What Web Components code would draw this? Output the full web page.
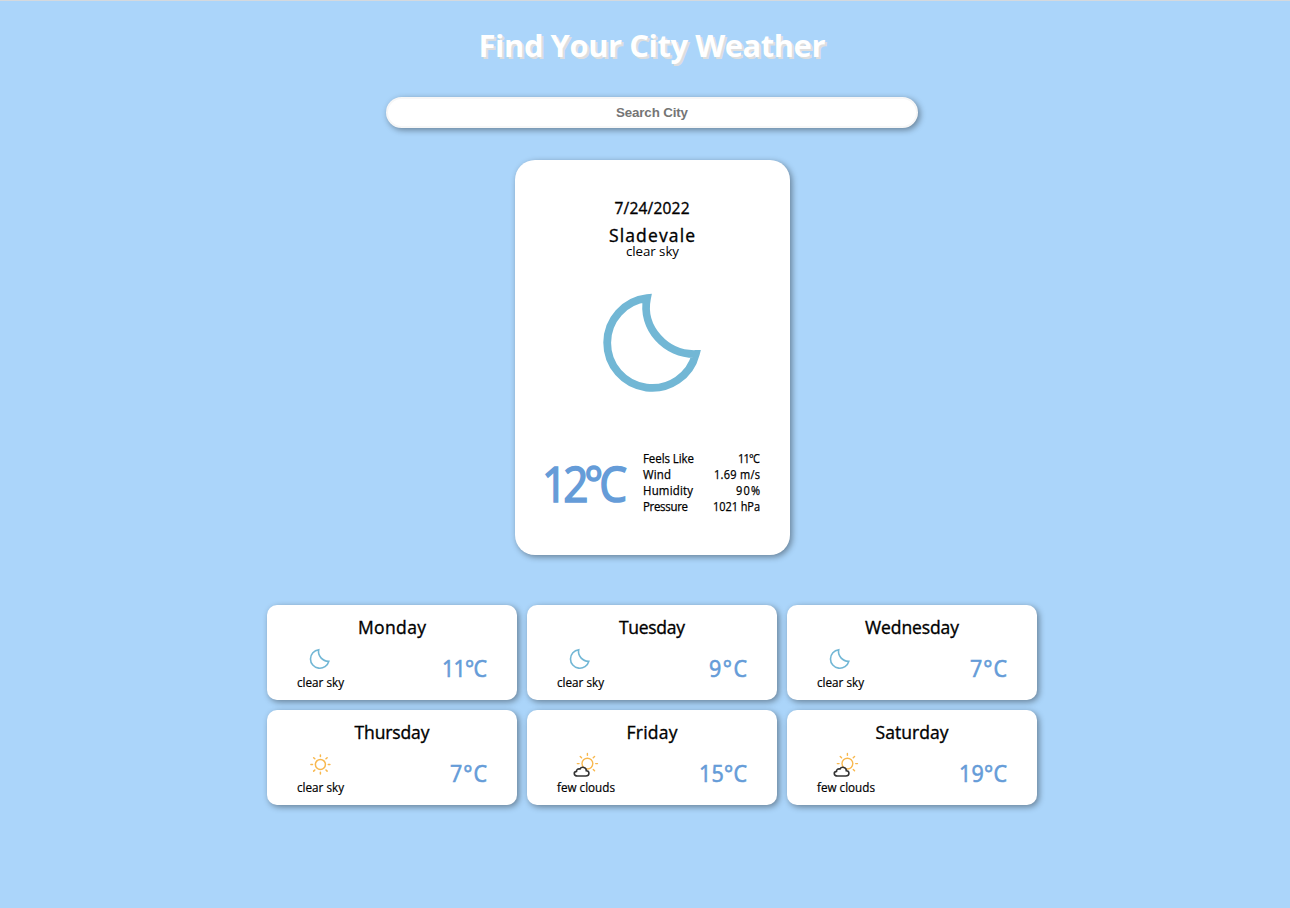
<!DOCTYPE html>
<html lang="en">
<head>
<meta charset="utf-8">
<title>Find Your City Weather</title>
<style>
html,body{margin:0;height:100%;overflow:hidden;background:#abd5fa}
body{font-family:"Open Sans","Noto Sans",sans-serif;color:#000}
</style>
</head>
<body>
<weather-app></weather-app>
<script>
// A single line of text whose tracking is adjusted to fill a given width.
// The optional x attribute condenses the glyphs horizontally.
class TextRun extends HTMLElement {
  connectedCallback() {
    const w = +this.getAttribute('w');
    const x = +(this.getAttribute('x') || 1);
    this.attachShadow({mode:'open'}).innerHTML =
      `<style>:host{display:block;flex:none;width:${w}px;white-space:nowrap}span{display:inline-block}</style><span><slot></slot></span>`;
    const span = this.shadowRoot.querySelector('span');
    const n = this.textContent.length;
    const natural = span.getBoundingClientRect().width;
    span.style.letterSpacing = ((w / x - natural) / (n - 1)).toFixed(3) + 'px';
    if (x !== 1) {
      span.style.transformOrigin = 'left';
      span.style.transform = `scaleX(${x})`;
    }
  }
}

const sunRays = (cx, cy, a, b, skip = []) => [0,1,2,3,4,5,6,7].filter(i => !skip.includes(i)).map(i => {
  const t = i * Math.PI / 4, c = Math.cos(t), s = Math.sin(t);
  return `M${(cx+a*c).toFixed(2)} ${(cy+a*s).toFixed(2)}L${(cx+b*c).toFixed(2)} ${(cy+b*s).toFixed(2)}`;
}).join('');
const icons = {
  moon: `<svg viewBox="0 0 104 104"><path d="M47 8.2A45 45 0 1 0 95.8 64C66 65 41 38 47 8.2Z" fill="none" stroke="#72b7d5" stroke-width="7.8" stroke-miterlimit="8"/></svg>`,
  sun: `<svg viewBox="0 0 30 26"><g fill="none" stroke="#f8b84e" stroke-width="1.5" stroke-linecap="round"><circle cx="15.4" cy="12.4" r="5"/><path d="${sunRays(15.4,12.4,7.9,9.5)}"/></g></svg>`,
  cloud: `<svg viewBox="0 0 30 26"><g fill="none" stroke="#f8b84e" stroke-width="1.4" stroke-linecap="round"><circle cx="16.4" cy="11.6" r="5.4"/><path d="${sunRays(16.4,11.6,8.3,10.1,[3])}"/></g><path d="M6.4 24h8.4c4 0 4.2-4.9.5-5.3.1-3.6-4.6-4.6-6.4-1.7-2-.5-3.5.7-3.4 2.4-3.2.5-3 4.6.9 4.6Z" fill="#fff" stroke="#333" stroke-width="1.6"/></svg>`
};
class WeatherIcon extends HTMLElement {
  connectedCallback() {
    this.attachShadow({mode:'open'}).innerHTML =
      `<style>:host{display:block;flex:none}svg{display:block;width:100%;height:100%}</style>${icons[this.getAttribute('name')]}`;
  }
}

class SearchBox extends HTMLElement {
  connectedCallback() {
    this.attachShadow({mode:'open'}).innerHTML = `<style>
:host{display:flex;justify-content:center;box-sizing:border-box;width:532px;height:31px;border:2px solid #f7f7f7;border-radius:16px;background:#fff;
box-shadow:2px 2px 6px rgba(0,0,0,.4);font:bold 13.333px/27px "Liberation Sans",Arial,sans-serif;color:#757575}
</style><text-run w="72">Search City</text-run>`;
  }
}

class CurrentWeather extends HTMLElement {
  connectedCallback() {
    const rows = [['Feels Like',51,'11°C',22],['Wind',28,'1.69 m/s',46],['Humidity',50,'90%',24],['Pressure',45,'1021 hPa',47]];
    this.attachShadow({mode:'open'}).innerHTML = `<style>
:host{display:flex;flex-direction:column;align-items:center;box-sizing:border-box;width:275px;height:395px;padding-top:36px;border-radius:20px;background:#fff;box-shadow:2px 2px 6px rgba(0,0,0,.4)}
.date{font-size:15.5px;line-height:24px;-webkit-text-stroke:.35px;margin-right:1px}
.city{font-size:17.5px;line-height:18px;-webkit-text-stroke:.35px;margin:6px 1px 0 0}
.desc{font-size:13.3px;line-height:14px}
weather-icon{width:104px;height:104px;margin:32px 2px 0 0}
.bottom{display:flex;align-items:flex-start;justify-content:space-between;box-sizing:border-box;width:100%;padding:0 30px 0 27px;margin-top:56px}
.temp{font-size:49px;line-height:66px;-webkit-text-stroke:1.6px;color:#659cd8}
.rows{width:117px;font-size:11.8px;line-height:16px;-webkit-text-stroke:.25px}
.row{display:flex;justify-content:space-between}
</style>
<text-run class="date" w="75">7/24/2022</text-run>
<text-run class="city" w="86">Sladevale</text-run>
<text-run class="desc" w="53">clear sky</text-run>
<weather-icon name="moon"></weather-icon>
<div class="bottom"><text-run class="temp" w="85" x=".9">12°C</text-run><div class="rows">${rows.map(r =>
`<div class="row"><text-run w="${r[1]}" x=".97">${r[0]}</text-run><text-run w="${r[3]}" x=".93">${r[2]}</text-run></div>`).join('')}</div></div>`;
  }
}

class DayCard extends HTMLElement {
  connectedCallback() {
    const [day, dw, icon, desc, temp, tw] = this.getAttribute('data').split('|');
    this.attachShadow({mode:'open'}).innerHTML = `<style>
:host{display:flex;flex-direction:column;align-items:center;box-sizing:border-box;height:95px;padding-top:10px;border-radius:10px;background:#fff;box-shadow:2px 2px 6px rgba(0,0,0,.4)}
.day{font-size:17.5px;line-height:24px;-webkit-text-stroke:.35px}
.info{display:flex;justify-content:space-between;box-sizing:border-box;width:100%;padding:0 30px;margin-top:8px}
.left{font-size:11.7px;line-height:16px;-webkit-text-stroke:.2px}
weather-icon{width:30px;height:26px;margin:0 auto 1px}
.left.moon weather-icon{width:21.5px;height:21.5px;margin:1px auto 4.5px 12px}
.left.sun weather-icon{margin-left:8px}
.left.cloud weather-icon{margin-left:14px}
.temp{font-size:23.6px;line-height:32px;-webkit-text-stroke:.65px;color:#659cd8;margin-top:5px}
</style>
<text-run class="day" w="${dw}">${day}</text-run>
<div class="info"><div class="left ${icon}"><weather-icon name="${icon}"></weather-icon><text-run w="${desc === 'clear sky' ? 47 : 58}">${desc}</text-run></div>
<text-run class="temp" w="${+tw+1}" x=".91">${temp}</text-run></div>`;
  }
}

class WeatherApp extends HTMLElement {
  connectedCallback() {
    const days = ['Monday|68|moon|clear sky|11°C|44','Tuesday|66|moon|clear sky|9°C|37','Wednesday|94|moon|clear sky|7°C|36',
      'Thursday|75|sun|clear sky|7°C|36','Friday|51|cloud|few clouds|15°C|47','Saturday|73|cloud|few clouds|19°C|47'];
    this.attachShadow({mode:'open'}).innerHTML = `<style>
:host{display:flex;flex-direction:column;align-items:center;box-sizing:border-box;width:1304px;height:908px;border-top:1px solid #d5d9dd;padding-top:23px}
.title{font-size:31px;line-height:42px;font-weight:700;color:#fff;text-shadow:2px 2px 0 #dedede}
search-box{margin-top:31px}
current-weather{margin:32px 0 50px 1px}
.days{display:grid;grid-template-columns:repeat(3,250px);gap:10px}
</style>
<text-run class="title" w="347">Find Your City Weather</text-run>
<search-box></search-box>
<current-weather></current-weather>
<div class="days">${days.map(d => `<day-card data="${d}"></day-card>`).join('')}</div>`;
  }
}
customElements.define('text-run', TextRun);
customElements.define('weather-icon', WeatherIcon);
customElements.define('search-box', SearchBox);
customElements.define('current-weather', CurrentWeather);
customElements.define('day-card', DayCard);
customElements.define('weather-app', WeatherApp);
</script>
</body>
</html>
